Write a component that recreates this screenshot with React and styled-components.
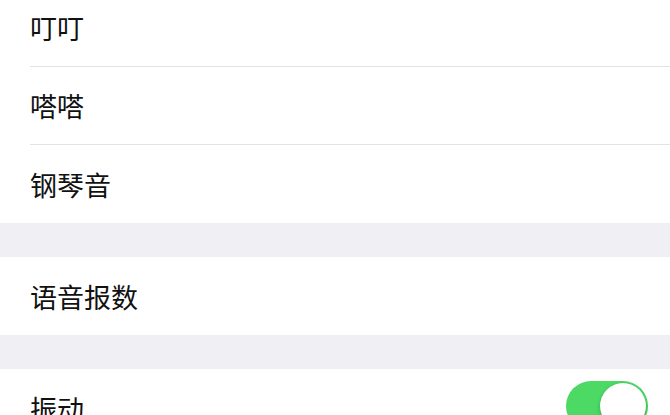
import React, { useState } from "react";
import styled, { createGlobalStyle } from "styled-components";

const GlobalStyle = createGlobalStyle`
  html, body {
    margin: 0;
    padding: 0;
    background: #ffffff;
    overflow: hidden;
  }
  body {
    font-family: "Noto Sans CJK SC", "Noto Sans", sans-serif;
  }
`;

const Page = styled.div`
  width: 670px;
  height: 415px;
  overflow: hidden;
  background: #efeff4;
`;

const Scroller = styled.div`
  margin-top: -11px;
  display: flex;
  flex-direction: column;
`;

const Group = styled.div`
  background: #ffffff;
  display: flex;
  flex-direction: column;
`;

const Gap = styled.div`
  height: 34px;
  background: #efeff4;
`;

const Row = styled.div`
  height: 78px;
  padding-left: 30px;
  display: flex;
  align-items: center;
`;

const Cell = styled.div`
  flex: 1;
  height: 100%;
  display: flex;
  align-items: center;
  justify-content: space-between;
  padding-right: 22px;
  box-sizing: border-box;
  border-bottom: ${(p) => (p.$last ? "none" : "1px solid #e3e3e6")};
`;

const Label = styled.span`
  font-size: 27px;
  color: #111111;
  line-height: 1;
`;

const Track = styled.button`
  width: 82px;
  height: 50px;
  border-radius: 25px;
  border: none;
  padding: 0;
  background: ${(p) => (p.$on ? "#4cd964" : "#e5e5ea")};
  position: relative;
  cursor: pointer;
  margin-bottom: 4px;
`;

const Knob = styled.span`
  position: absolute;
  top: 2px;
  left: ${(p) => (p.$on ? "34px" : "2px")};
  width: 46px;
  height: 46px;
  border-radius: 50%;
  background: #ffffff;
  box-shadow: 0 2px 4px rgba(0, 0, 0, 0.2), 0 0 0 0.5px rgba(0, 0, 0, 0.06);
`;

const Toggle = ({ on, onChange }) => (
  <Track $on={on} onClick={() => onChange(!on)}>
    <Knob $on={on} />
  </Track>
);

const sounds = ["叮叮", "嗒嗒", "钢琴音"];

const App = () => {
  const [vibrate, setVibrate] = useState(true);
  return (
    <Page>
      <GlobalStyle />
      <Scroller>
        <Group>
          {sounds.map((s, i) => (
            <Row key={s}>
              <Cell $last={i === sounds.length - 1}>
                <Label>{s}</Label>
              </Cell>
            </Row>
          ))}
        </Group>
        <Gap />
        <Group>
          <Row>
            <Cell $last>
              <Label>语音报数</Label>
            </Cell>
          </Row>
        </Group>
        <Gap />
        <Group>
          <Row>
            <Cell $last>
              <Label>振动</Label>
              <Toggle on={vibrate} onChange={setVibrate} />
            </Cell>
          </Row>
        </Group>
      </Scroller>
    </Page>
  );
};

export default App;
